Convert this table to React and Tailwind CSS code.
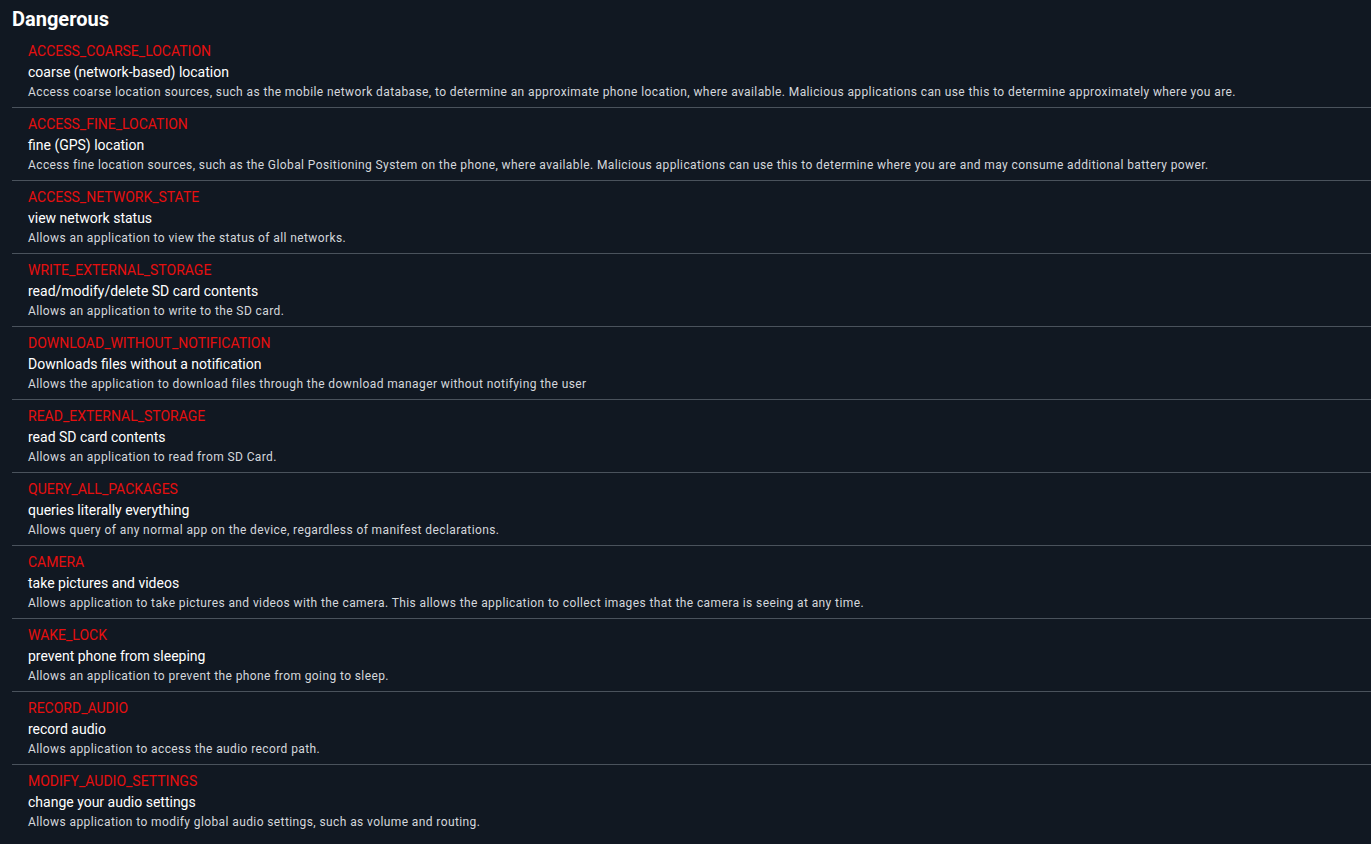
import React from "react";

const items = [
  ["ACCESS_COARSE_LOCATION", "coarse (network-based) location", "Access coarse location sources, such as the mobile network database, to determine an approximate phone location, where available. Malicious applications can use this to determine approximately where you are."],
  ["ACCESS_FINE_LOCATION", "fine (GPS) location", "Access fine location sources, such as the Global Positioning System on the phone, where available. Malicious applications can use this to determine where you are and may consume additional battery power."],
  ["ACCESS_NETWORK_STATE", "view network status", "Allows an application to view the status of all networks."],
  ["WRITE_EXTERNAL_STORAGE", "read/modify/delete SD card contents", "Allows an application to write to the SD card."],
  ["DOWNLOAD_WITHOUT_NOTIFICATION", "Downloads files without a notification", "Allows the application to download files through the download manager without notifying the user"],
  ["READ_EXTERNAL_STORAGE", "read SD card contents", "Allows an application to read from SD Card."],
  ["QUERY_ALL_PACKAGES", "queries literally everything", "Allows query of any normal app on the device, regardless of manifest declarations."],
  ["CAMERA", "take pictures and videos", "Allows application to take pictures and videos with the camera. This allows the application to collect images that the camera is seeing at any time."],
  ["WAKE_LOCK", "prevent phone from sleeping", "Allows an application to prevent the phone from going to sleep."],
  ["RECORD_AUDIO", "record audio", "Allows application to access the audio record path."],
  ["MODIFY_AUDIO_SETTINGS", "change your audio settings", "Allows application to modify global audio settings, such as volume and routing."],
];

export default function App() {
  return (
    <div className="min-h-[844px] bg-[#111822] text-white pl-3 pt-[6px]" style={{ fontFamily: "Roboto, 'Noto Sans', sans-serif" }}>
      <h2 className="text-[20px] font-bold leading-[26px] text-white">Dangerous</h2>
      <div className="mt-[3px]">
        {items.map(([name, title, desc], i) => (
          <div key={name} className={"pl-4 pt-[6px] pb-[6px] " + (i < items.length - 1 ? "border-b border-[#4a525c]" : "")}>
            <div className="text-[14px] leading-[20px] text-[#e60f0f]">{name}</div>
            <div className="text-[14px] leading-[22px] text-white">{title}</div>
            <div className="text-[12px] leading-[18px] text-[#d4d7dc] tracking-[0.4px]">{desc}</div>
          </div>
        ))}
      </div>
    </div>
  );
}
